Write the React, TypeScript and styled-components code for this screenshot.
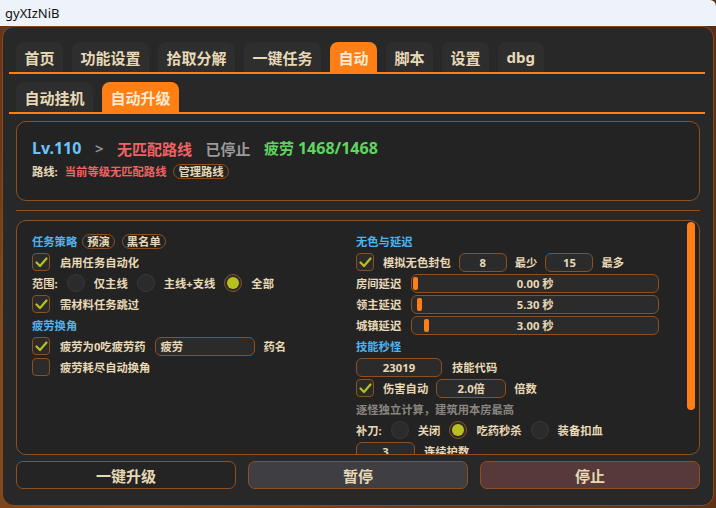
import React from 'react';
import styled, { createGlobalStyle } from 'styled-components';

const GlobalStyle = createGlobalStyle`
  html, body {
    margin: 0;
    padding: 0;
  }
  body {
    width: 716px;
    height: 508px;
    overflow: hidden;
    font-family: "Noto Sans", "Noto Sans CJK SC", sans-serif;
  }
  * { box-sizing: border-box; }
`;

const ORANGE = '#ff7f17';
const BROWN = '#8d5121';
const CREAM = '#e8d9b6';
const BLUE = '#4db4f0';
const LIME = '#b8c020';

const Desktop = styled.div`
  width: 716px;
  height: 508px;
  display: flex;
  flex-direction: column;
  background: radial-gradient(circle at 20% 80%, #9a5a22 0%, #6d3a18 40%, #5a2e14 100%);
`;

const TitleBar = styled.div`
  height: 26px;
  flex: none;
  background: #eef3fa;
  border-top-right-radius: 6px;
  display: flex;
  align-items: center;
  padding-left: 5px;
  font-family: "Noto Sans", sans-serif;
  font-size: 13px;
  color: #111;
`;

const Window = styled.div`
  flex: 1;
  min-height: 0;
  margin: 0 2px 2px 2px;
  background: #282828;
  border: 1px solid #8a4a18;
  border-radius: 12px;
  padding: 15px 8px 16px 6px;
  display: flex;
  flex-direction: column;
  font-family: "Noto Sans", "Noto Sans CJK SC", sans-serif;
  font-weight: 700;
  color: ${CREAM};
`;

const TabBar = styled.div<{ $top?: number }>`
  display: flex;
  gap: 9px;
  padding: 0 7px;
  margin-top: ${({ $top }) => $top ?? 0}px;
  border-bottom: 2px solid ${ORANGE};
  flex: none;
`;

const Tab = styled.div<{ $active?: boolean }>`
  height: 30px;
  padding: 0 8.5px;
  display: flex;
  align-items: center;
  font-size: 15px;
  border-radius: 8px 8px 0 0;
  background: ${({ $active }) => ($active ? ORANGE : '#2e2e2e')};
  color: ${({ $active }) => ($active ? '#f7ead0' : CREAM)};
`;

const Inner = styled.div`
  flex: 1;
  display: flex;
  flex-direction: column;
  padding: 0 5px 0 7px;
  min-height: 0;
`;

const StatusCard = styled.div`
  margin-top: 7px;
  height: 80px;
  flex: none;
  border: 1px solid ${BROWN};
  border-radius: 10px;
  background: #232323;
  padding: 16px 15px 0;
  display: flex;
  flex-direction: column;
  gap: 5px;
`;

const StatusLine = styled.div`
  display: flex;
  align-items: center;
  gap: 13.5px;
  height: 20px;
  font-size: 15px;
`;

const StatusText = styled.span<{ $color: string; $num?: boolean }>`
  color: ${({ $color }) => $color};
  font-size: ${({ $num }) => ($num ? '16px' : 'inherit')};
`;

const RouteLine = styled.div`
  display: flex;
  align-items: center;
  gap: 7px;
  height: 16px;
  font-size: 11.3px;
`;

const Tag = styled.span`
  display: inline-flex;
  align-items: center;
  height: 15px;
  padding: 0 4px;
  border: 1px solid ${BROWN};
  border-radius: 8px;
  font-size: 11.3px;
  color: ${CREAM};
`;

const Separator = styled.div`
  flex: none;
  height: 1px;
  background: ${BROWN};
  margin: 9px 0;
`;

const ScrollBox = styled.div`
  position: relative;
  flex: 1;
  min-height: 0;
  overflow: hidden;
  border: 1px solid ${BROWN};
  border-radius: 10px;
  background: #232323;
  padding: 11px 15px 0;
`;

const Thumb = styled.div`
  position: absolute;
  top: 1px;
  right: 4px;
  width: 8px;
  height: 188px;
  border-radius: 4px;
  background: ${ORANGE};
`;

const Columns = styled.div`
  display: grid;
  grid-template-columns: 308px 1fr;
  column-gap: 16px;
  font-size: 11.3px;
`;

const Column = styled.div`
  display: flex;
  flex-direction: column;
  gap: 3px;
`;

const Row = styled.div<{ $gap?: number }>`
  display: flex;
  align-items: center;
  height: 18px;
  gap: ${({ $gap }) => $gap ?? 9}px;
  white-space: nowrap;
`;

const Heading = styled.span`
  color: ${BLUE};
  margin-right: -2px;
`;

const Hint = styled.span`
  color: #8a8580;
`;

const Box = styled.span`
  width: 18px;
  height: 18px;
  flex: none;
  border: 1px solid ${BROWN};
  border-radius: 4px;
  background: #2b2b2b;
  display: flex;
  align-items: center;
  justify-content: center;
  margin-right: 1px;
`;

const Check = ({ on }: { on?: boolean }) => (
  <Box>
    {on && (
      <svg width="13" height="11" viewBox="0 0 13 11">
        <path d="M1.5 5.5 L5 9 L11.5 1.5" fill="none" stroke={LIME} strokeWidth="2.2" strokeLinecap="round" strokeLinejoin="round" />
      </svg>
    )}
  </Box>
);

const RadioCircle = styled.span<{ $on?: boolean }>`
  width: 18px;
  height: 18px;
  flex: none;
  border-radius: 50%;
  border: 1px solid ${({ $on }) => ($on ? BROWN : '#3d3832')};
  background: #2b2b2b;
  display: flex;
  align-items: center;
  justify-content: center;
  &::after {
    content: '';
    display: ${({ $on }) => ($on ? 'block' : 'none')};
    width: 12px;
    height: 12px;
    border-radius: 50%;
    background: ${LIME};
  }
`;

const Field = styled.span<{ $w: number; $left?: boolean }>`
  width: ${({ $w }) => $w}px;
  height: 19px;
  flex: none;
  border: 1px solid ${BROWN};
  border-radius: 6px;
  background: #2b2b2b;
  display: flex;
  align-items: center;
  justify-content: ${({ $left }) => ($left ? 'flex-start' : 'center')};
  padding: 0 5px;
  font-size: 11.3px;
`;

const SliderTrack = styled.div`
  position: relative;
  width: 248px;
  height: 19px;
  margin-left: 10px;
  border: 1px solid ${BROWN};
  border-radius: 6px;
  background: #2b2b2b;
  display: flex;
  align-items: center;
  justify-content: center;
`;

const SliderGrab = styled.span`
  position: absolute;
  top: 2px;
  width: 5px;
  height: 13px;
  border-radius: 2px;
  background: ${ORANGE};
`;

const Slider = ({ label, value, pos }: { label: string; value: string; pos: number }) => (
  <Row $gap={0}>
    <span>{label}</span>
    <SliderTrack>
      <SliderGrab style={{ left: pos }} />
      {value}
    </SliderTrack>
  </Row>
);

const Actions = styled.div`
  flex: none;
  margin-top: 6px;
  display: grid;
  grid-template-columns: repeat(3, 1fr);
  gap: 12px;
`;

const ActionButton = styled.div<{ $bg: string }>`
  height: 28px;
  border: 1px solid ${BROWN};
  border-radius: 7px;
  background: ${({ $bg }) => $bg};
  display: flex;
  align-items: center;
  justify-content: center;
  font-size: 15px;
  color: ${CREAM};
`;

const mainTabs = ['首页', '功能设置', '拾取分解', '一键任务', '自动', '脚本', '设置', 'dbg'];
const subTabs = ['自动挂机', '自动升级'];

export default function App() {
  return (
    <>
      <GlobalStyle />
      <Desktop>
        <TitleBar>gyXIzNiB</TitleBar>
        <Window>
          <TabBar>
            {mainTabs.map((t) => (
              <Tab key={t} $active={t === '自动'}>{t}</Tab>
            ))}
          </TabBar>
          <TabBar $top={8}>
            {subTabs.map((t) => (
              <Tab key={t} $active={t === '自动升级'}>{t}</Tab>
            ))}
          </TabBar>
          <Inner>
            <StatusCard>
              <StatusLine>
                <StatusText $color="#6cc4f6" $num>Lv.110</StatusText>
                <StatusText $color="#8e8e8e">&gt;</StatusText>
                <StatusText $color="#f06262">无匹配路线</StatusText>
                <StatusText $color="#9a9a9a">已停止</StatusText>
                <StatusText $color="#5ed65e">
                  疲劳 <StatusText $color="#5ed65e" $num>1468/1468</StatusText>
                </StatusText>
              </StatusLine>
              <RouteLine>
                <span>路线:</span>
                <StatusText $color="#f06262">当前等级无匹配路线</StatusText>
                <Tag>管理路线</Tag>
              </RouteLine>
            </StatusCard>
            <Separator />
            <ScrollBox>
              <Columns>
                <Column>
                  <Row $gap={7}>
                    <Heading>任务策略</Heading>
                    <Tag>预演</Tag>
                    <Tag>黑名单</Tag>
                  </Row>
                  <Row>
                    <Check on />
                    <span>启用任务自动化</span>
                  </Row>
                  <Row>
                    <span>范围:</span>
                    <RadioCircle />
                    <span>仅主线</span>
                    <RadioCircle />
                    <span>主线+支线</span>
                    <RadioCircle $on />
                    <span>全部</span>
                  </Row>
                  <Row>
                    <Check on />
                    <span>需材料任务跳过</span>
                  </Row>
                  <Row>
                    <Heading>疲劳换角</Heading>
                  </Row>
                  <Row>
                    <Check on />
                    <span>疲劳为0吃疲劳药</span>
                    <Field $w={100} $left>疲劳</Field>
                    <span>药名</span>
                  </Row>
                  <Row>
                    <Check />
                    <span>疲劳耗尽自动换角</span>
                  </Row>
                </Column>
                <Column>
                  <Row>
                    <Heading>无色与延迟</Heading>
                  </Row>
                  <Row $gap={8}>
                    <Check on />
                    <span>模拟无色封包</span>
                    <Field $w={48}>8</Field>
                    <span>最少</span>
                    <Field $w={48}>15</Field>
                    <span>最多</span>
                  </Row>
                  <Slider label="房间延迟" value="0.00 秒" pos={1} />
                  <Slider label="领主延迟" value="5.30 秒" pos={5} />
                  <Slider label="城镇延迟" value="3.00 秒" pos={12} />
                  <Row>
                    <Heading>技能秒怪</Heading>
                  </Row>
                  <Row $gap={10}>
                    <Field $w={86}>23019</Field>
                    <span>技能代码</span>
                  </Row>
                  <Row $gap={8}>
                    <Check on />
                    <span>伤害自动</span>
                    <Field $w={70}>2.0倍</Field>
                    <span>倍数</span>
                  </Row>
                  <Row>
                    <Hint>逐怪独立计算，建筑用本房最高</Hint>
                  </Row>
                  <Row>
                    <span>补刀:</span>
                    <RadioCircle />
                    <span>关闭</span>
                    <RadioCircle $on />
                    <span>吃药秒杀</span>
                    <RadioCircle />
                    <span>装备扣血</span>
                  </Row>
                  <Row $gap={9}>
                    <Field $w={59}>3</Field>
                    <span>连续护数</span>
                  </Row>
                  <Row>
                    <Check />
                    <span>自动修理</span>
                  </Row>
                </Column>
              </Columns>
              <Thumb />
            </ScrollBox>
            <Actions>
              <ActionButton $bg="#242424">一键升级</ActionButton>
              <ActionButton $bg="#3e3e43">暂停</ActionButton>
              <ActionButton $bg="#573939">停止</ActionButton>
            </Actions>
          </Inner>
        </Window>
      </Desktop>
    </>
  );
}
